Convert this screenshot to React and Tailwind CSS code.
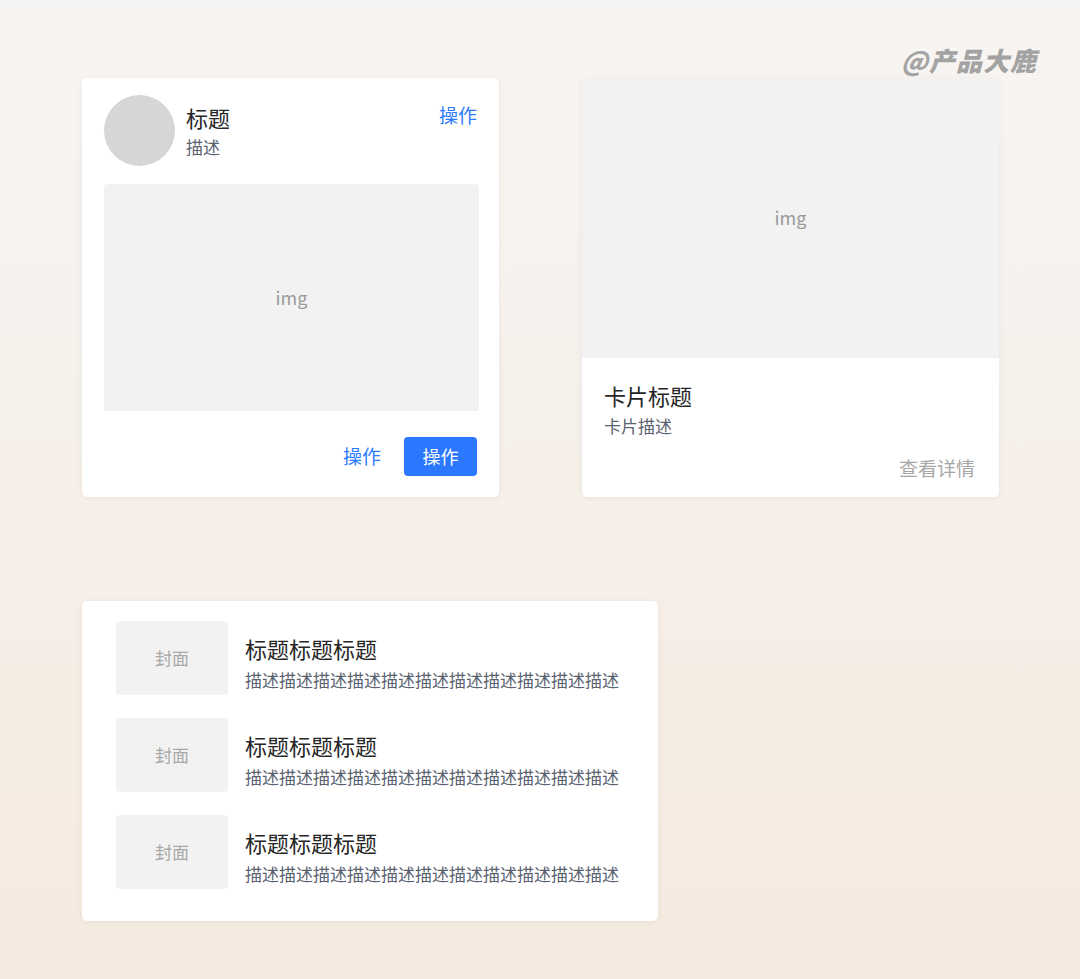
import React from 'react';

const FONT = "font-['Noto_Sans_CJK_SC','Noto_Sans',sans-serif]";

function ListItem() {
  return (
    <div className="flex items-start gap-[17px]">
      <div className="w-[112px] h-[74px] rounded-[4px] bg-[#f2f2f2] flex items-center justify-center text-[17px] text-[#a8a8a8]">
        封面
      </div>
      <div className="flex flex-col pt-[12px]">
        <div className="text-[22px] leading-[30px] text-[#262626]">标题标题标题</div>
        <div className="text-[17px] leading-[26px] text-[#5a6270] mt-[4px]">描述描述描述描述描述描述描述描述描述描述描述</div>
      </div>
    </div>
  );
}

export default function App() {
  return (
    <div className={`${FONT} relative min-h-[979px] w-full bg-gradient-to-b from-[#f7f5f3] to-[#f5eadf] pl-[82px] pt-[78px]`}>
      {/* watermark */}
      <div className="absolute left-[901px] top-[40px] text-[26px] font-black italic text-[#a3a3a3] tracking-[1px]">
        @产品大鹿
      </div>

      <div className="flex gap-[83px]">
        {/* Card 1 */}
        <div className="w-[417px] h-[419px] bg-white rounded-[5px] shadow-[0_1px_6px_rgba(0,0,0,0.06)] pl-[22px] pr-[20px] pt-[17px] flex flex-col">
          <div className="flex items-start">
            <div className="w-[71px] h-[71px] rounded-full bg-[#d6d6d6]" />
            <div className="ml-[11px] flex flex-col pt-[6px]">
              <div className="text-[22px] leading-[32px] text-[#262626]">标题</div>
              <div className="text-[17px] leading-[24px] text-[#5a6270] mt-[2px]">描述</div>
            </div>
            <div className="ml-auto mr-[2px] pt-[7px] text-[19px] leading-[26px] text-[#2b7bff]">操作</div>
          </div>
          <div className="mt-[18px] h-[227px] bg-[#f2f2f2] rounded-t-[4px] flex items-center justify-center text-[18px] text-[#9a9a9a]">
            img
          </div>
          <div className="mt-[26px] flex items-center justify-end gap-[23px] mr-[2px]">
            <span className="text-[19px] text-[#2b7bff]">操作</span>
            <button className="w-[73px] h-[39px] rounded-[4px] bg-[#2b78ff] text-white text-[18px]">操作</button>
          </div>
        </div>

        {/* Card 2 */}
        <div className="w-[417px] h-[419px] bg-white rounded-[5px] shadow-[0_1px_6px_rgba(0,0,0,0.06)] overflow-hidden flex flex-col">
          <div className="h-[280px] bg-[#f2f2f2] flex items-center justify-center text-[18px] text-[#9a9a9a] pb-[2px]">
            img
          </div>
          <div className="pl-[22px] pr-[24px] pt-[21px] flex flex-col">
            <div className="text-[22px] leading-[32px] text-[#262626]">卡片标题</div>
            <div className="text-[17px] leading-[26px] text-[#5a6270] mt-[2px]">卡片描述</div>
            <div className="self-end mt-[16px] text-[19px] leading-[26px] text-[#a6a6a6]">查看详情</div>
          </div>
        </div>
      </div>

      {/* Card 3 */}
      <div className="mt-[104px] w-[576px] h-[320px] bg-white rounded-[5px] shadow-[0_1px_6px_rgba(0,0,0,0.06)] pl-[34px] pt-[20px] flex flex-col gap-[23px]">
        <ListItem />
        <ListItem />
        <ListItem />
      </div>
    </div>
  );
}
